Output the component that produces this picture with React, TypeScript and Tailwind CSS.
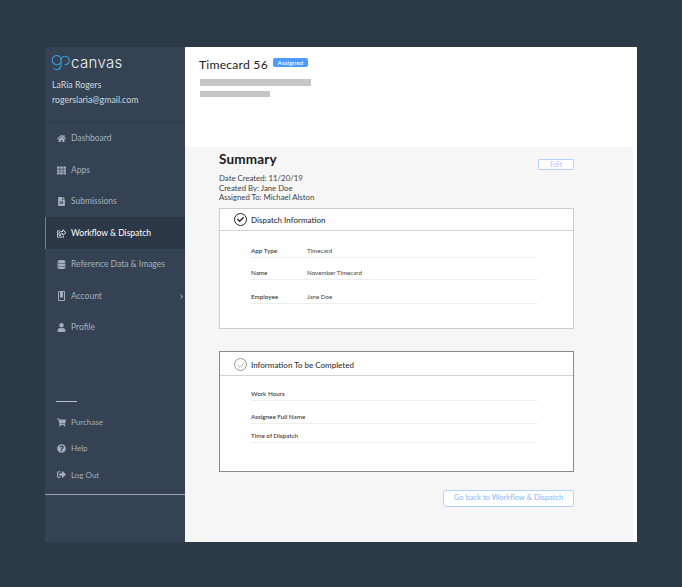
import React from 'react';
import {
  FaHome,
  FaTh,
  FaFileAlt,
  FaRegShareSquare,
  FaDatabase,
  FaUser,
  FaShoppingCart,
  FaQuestionCircle,
  FaSignOutAlt,
  FaChevronRight,
  FaCheck,
} from 'react-icons/fa';

// outlined book with a bookmark notch, no close match in the icon packs
const AccountIcon = ({ size }: { size: number }) => (
  <svg width={size} height={size + 1} viewBox="0 0 9 10" fill="none" stroke="currentColor" strokeWidth="1">
    <path d="M1.5 0.5 H7.5 V9.5 H1.5 Z" />
    <path d="M3 7 L4.5 6 L6 7 V1 H3 Z" fill="currentColor" stroke="none" />
  </svg>
);

const navItems = [
  { label: 'Dashboard', icon: FaHome },
  { label: 'Apps', icon: FaTh },
  { label: 'Submissions', icon: FaFileAlt },
  { label: 'Workflow & Dispatch', icon: FaRegShareSquare, active: true },
  { label: 'Reference Data & Images', icon: FaDatabase },
  { label: 'Account', icon: AccountIcon, arrow: true },
  { label: 'Profile', icon: FaUser },
];

const footerItems = [
  { label: 'Purchase', icon: FaShoppingCart },
  { label: 'Help', icon: FaQuestionCircle },
  { label: 'Log Out', icon: FaSignOutAlt },
];

const Sidebar = () => (
  <aside className="w-[140px] shrink-0 flex flex-col bg-[#344253] font-['Lato',sans-serif]">
    <div className="h-[75.5px] border-b border-[#2d3a49] pl-[6px] pt-[7px]">
      <div className="flex items-center h-[17px]">
        <svg width="20" height="17" viewBox="0 0 20 17" fill="none" stroke="#3d9bdc" strokeWidth="1.1">
          <path d="M9.6 3.6 A4.6 4.6 0 1 0 9.8 8.4" />
          <path d="M10 3.5 V11 A4.3 4.3 0 0 1 2.4 14" />
          <path d="M10 6.5 A4.2 4.2 0 1 1 13.6 10.6" />
        </svg>
        <span className="text-[15px] leading-none font-light tracking-[0.35px] text-[#eef2f5] font-['Inter',sans-serif]">canvas</span>
      </div>
      <p className="mt-[6px] ml-[1px] text-[8.8px] leading-[15px] text-[#d3d9de]">LaRia Rogers</p>
      <p className="ml-[1px] text-[8.8px] leading-[15px] text-[#d3d9de]">rogerslaria@gmail.com</p>
    </div>
    <nav className="flex flex-col">
      {navItems.map(({ label, icon: Icon, active, arrow }) => (
        <div
          key={label}
          className={`h-[31.5px] flex items-center pt-[1px] pl-[11px] pr-[1px] text-[8.5px] border-l ${
            active ? 'bg-[#2c3846] text-white border-[#3f8fc0]' : 'text-[#a4afb9] border-transparent'
          }`}
        >
          <span className={`w-[14px] ${active ? 'text-[#e8ecef]' : 'text-[#a4afb9]'}`}>
            <Icon size={9} />
          </span>
          <span className="flex-1">{label}</span>
          {arrow && <FaChevronRight size={5} />}
        </div>
      ))}
    </nav>
    <div className="mt-[58px] ml-[11px] w-[21px] h-px bg-[#b9c1c8]" />
    <div className="mt-[7px] flex flex-col">
      {footerItems.map(({ label, icon: Icon }) => (
        <div key={label} className="h-[26.3px] flex items-center pl-[12px] text-[8px] text-[#a4afb9]">
          <span className="w-[14px]">
            <Icon size={9} />
          </span>
          {label}
        </div>
      ))}
    </div>
    <div className="mt-[6px] h-px bg-[#9aa4ae]" />
  </aside>
);

const Field = ({ label, value, gap }: { label: string; value?: string; gap: string }) => (
  <div className={`flex items-center h-[14px] border-b border-[#eeeeee] ${gap}`}>
    <span className="w-[56px] text-[6.3px] font-medium text-[#333]">{label}</span>
    {value && <span className="text-[6.2px] text-[#444]">{value}</span>}
  </div>
);

const Card = ({ title, done, children }: { title: string; done?: boolean; children: React.ReactNode }) => (
  <section className={`h-[121px] bg-white border ${done ? 'border-[#cccccc]' : 'border-[#8a8a8a]'}`}>
    <header className={`flex items-center pl-[14px] border-b border-[#d4d4d4] ${done ? 'h-[22px] pt-[1px]' : 'h-[24px] pt-[3px]'}`}>
      {done ? (
        <span className="w-[13px] h-[13px] rounded-full border border-[#222] flex items-center justify-center">
          <FaCheck size={7} className="text-[#222]" />
        </span>
      ) : (
        <span className="w-[13px] h-[13px] rounded-full border border-[#999] flex items-center justify-center">
          <svg width="8" height="6" viewBox="0 0 8 6" fill="none" stroke="#999" strokeWidth="0.8">
            <path d="M0.5 3 L3 5.4 L7.5 0.5" />
          </svg>
        </span>
      )}
      <h3 className="ml-[4px] text-[8px] font-medium text-[#333]">{title}</h3>
    </header>
    <div className="pl-[31px] pr-[36px]">{children}</div>
  </section>
);

const App = () => (
  <div className="min-h-[587px] bg-[#2c3947] pt-[47px] pl-[45px]">
    <div className="w-[592px] h-[495px] flex bg-white">
      <Sidebar />
      <main className="flex-1 flex flex-col font-['Lato',sans-serif]">
        <div className="h-[100px] pl-[14px] pt-[10px]">
          <div className="flex items-center h-[16px]">
            <h1 className="text-[12.2px] tracking-[0.2px] text-[#222]">Timecard 56</h1>
            <span className="ml-[5px] -mt-[5px] w-[35px] h-[9px] rounded-[2px] bg-[#4b9bff] text-white text-[6.5px] leading-[9px] text-center">Assigned</span>
          </div>
          <div className="mt-[6px] ml-[1px] w-[111px] h-[7px] bg-[#c6c6c6]" />
          <div className="mt-[5px] ml-[1px] w-[70px] h-[6px] bg-[#c6c6c6]" />
        </div>
        <div className="flex-1 mr-[4px] bg-[#f6f6f6] pl-[34px] pr-[59px] pt-[4px]">
          <div className="flex justify-between">
            <h2 className="text-[13.5px] leading-[17px] font-bold tracking-[0.2px] text-[#1c1c1c]">Summary</h2>
            <button className="mt-[8px] w-[36px] h-[11px] rounded-[2px] bg-white border border-[#b5d2ff] text-[#a9c9ff] text-[7px] leading-none">Edit</button>
          </div>
          <div className="mt-[4px] text-[7.8px] leading-[9.6px] text-[#444]">
            <p>Date Created: 11/20/19</p>
            <p>Created By: Jane Doe</p>
            <p>Assigned To: Michael Alston</p>
          </div>
          <div className="mt-[5px] flex flex-col gap-[22px]">
            <Card title="Dispatch Information" done>
              <Field label="App Type" value="Timecard" gap="mt-[13px]" />
              <Field label="Name" value="November Timecard" gap="mt-[8px]" />
              <Field label="Employee" value="Jane Doe" gap="mt-[10px]" />
            </Card>
            <Card title="Information To be Completed">
              <Field label="Work Hours" gap="mt-[11px]" />
              <Field label="Assignee Full Name" gap="mt-[9px]" />
              <Field label="Time of Dispatch" gap="mt-[5px]" />
            </Card>
          </div>
          <div className="mt-[18px] flex justify-end">
            <button className="w-[131px] h-[17px] rounded-[3px] bg-white border border-[#b5d2ff] text-[#8ab6ff] text-[7.6px] leading-none">Go back to Workflow &amp; Dispatch</button>
          </div>
        </div>
      </main>
    </div>
  </div>
);

export default App;
